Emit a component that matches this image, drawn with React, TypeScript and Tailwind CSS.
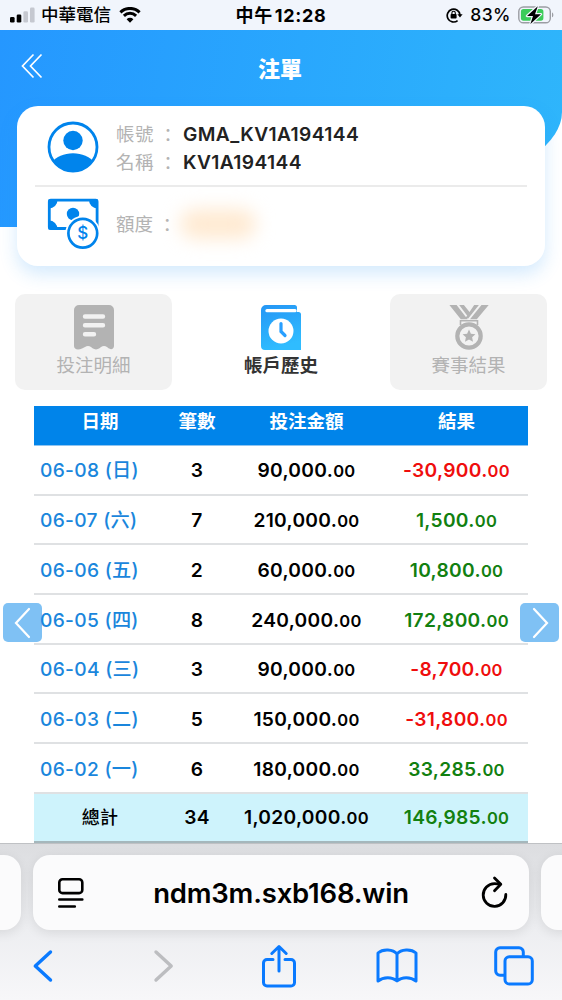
import React from "react";

type HistoryRow = {
  date: string;
  count: number;
  stake: string;
  result: string;
};

const rows: HistoryRow[] = [
  { date: "06-08 (日)", count: 3, stake: "90,000", result: "-30,900" },
  { date: "06-07 (六)", count: 7, stake: "210,000", result: "1,500" },
  { date: "06-06 (五)", count: 2, stake: "60,000", result: "10,800" },
  { date: "06-05 (四)", count: 8, stake: "240,000", result: "172,800" },
  { date: "06-04 (三)", count: 3, stake: "90,000", result: "-8,700" },
  { date: "06-03 (二)", count: 5, stake: "150,000", result: "-31,800" },
  { date: "06-02 (一)", count: 6, stake: "180,000", result: "33,285" },
];

const Amount = ({ value }: { value: string }) => (
  <span>
    {value}.<span className="text-[16.5px]">00</span>
  </span>
);

const StatusBar = () => (
  <div className="flex h-[30px] shrink-0 items-center bg-[#f1f5fc] text-black">
    <div className="flex w-[200px] items-center pl-[10px]">
      <svg width="26" height="16" viewBox="0 0 26 16">
        <rect x="0" y="10" width="4.6" height="5.6" rx="1.3" />
        <rect x="6.7" y="7.4" width="4.6" height="8.2" rx="1.3" />
        <rect x="13.4" y="4.2" width="4.6" height="11.4" rx="1.3" fill="#c5c8d0" />
        <rect x="20" y="0.6" width="4.6" height="15" rx="1.3" fill="#c5c8d0" />
      </svg>
      <span className="ml-[5px] text-[17.5px] font-medium">中華電信</span>
      <svg className="ml-2" width="22" height="16" viewBox="0 0 22 16">
        <path
          d="M1.4 5.3a13.8 13.8 0 0 1 19.2 0M4.9 8.8a8.8 8.8 0 0 1 12.2 0"
          fill="none"
          stroke="#000"
          strokeWidth="3"
        />
        <path d="M11 15.8 7.6 12.2a4.9 4.9 0 0 1 6.8 0z" />
      </svg>
    </div>
    <div className="flex-1 text-center text-[18px] font-bold tracking-[0.7px] whitespace-nowrap">
      中午<span className="ml-[2px]">12:28</span>
    </div>
    <div className="flex w-[200px] items-center justify-end pr-[8px]">
      <svg width="17" height="16" viewBox="0 0 17 16">
        <path
          d="M11.6 13.6A6.4 6.4 0 1 1 14 8"
          fill="none"
          stroke="#000"
          strokeWidth="1.7"
        />
        <path d="M11.4 7.2h5.2L14 10.6z" />
        <rect x="4.6" y="7" width="6" height="4.6" rx="0.8" />
        <path d="M5.9 7V5.9a1.7 1.7 0 0 1 3.4 0V7" fill="none" stroke="#000" strokeWidth="1.1" />
      </svg>
      <span className="ml-[7px] text-[17.5px] font-medium tracking-[0.5px]">83%</span>
      <svg className="ml-[7px]" width="36" height="20" viewBox="0 0 36 20">
        <rect x="0.8" y="2" width="31.5" height="15.8" rx="4.6" fill="none" stroke="#9b9da3" strokeWidth="1.4" />
        <path d="M34 7.5c1.8.6 1.8 4.2 0 4.8z" fill="#9b9da3" />
        <rect x="2.9" y="4.1" width="22.5" height="11.6" rx="2.6" fill="#3ccb5a" />
        <path
          d="M19.8 1.2 9 11h6l-2.6 8L23 9.2h-6z"
          stroke="#f1f5fc"
          strokeWidth="2.4"
          paintOrder="stroke"
          strokeLinejoin="round"
        />
      </svg>
    </div>
  </div>
);

const UserIcon = () => (
  <svg width="52" height="52" viewBox="0 0 52 52" fill="#0084ec">
    <clipPath id="avatar">
      <circle cx="26" cy="26" r="24.5" />
    </clipPath>
    <circle cx="26" cy="26" r="24" fill="none" stroke="#0084ec" strokeWidth="2.8" />
    <circle cx="26" cy="19.5" r="9.7" />
    <path d="M5 41c4-5 12-8.7 21-8.7S43 36 47 41L36 52H16z" clipPath="url(#avatar)" />
  </svg>
);

const CashIcon = () => (
  <svg width="52" height="52" viewBox="0 0 52 52" fill="#0084ec">
    <rect x="2.3" y="2.2" width="47.8" height="28.3" rx="1.5" fill="none" stroke="#0084ec" strokeWidth="2.8" />
    <path d="M1.500 1.500h9a8.500 8.500 0 0 1-9 9zM51 1.500h-9a8.500 8.500 0 0 0 9 9zM1.500 31.500h9a8.500 8.500 0 0 0-9-9z" />
    <circle cx="26" cy="16" r="6.200" />
    <circle cx="35.800" cy="35.300" r="17.500" fill="#fff" />
    <circle cx="35.800" cy="35.300" r="14.400" fill="none" stroke="#0084ec" strokeWidth="2.700" />
    <text
      x="35.8"
      y="41.2"
      textAnchor="middle"
      className="font-['Inter'] text-[17px] font-medium"
    >
      $
    </text>
  </svg>
);

const ReceiptIcon = () => (
  <svg width="40" height="45" viewBox="0 0 40 45">
    <path
      d="M5 0h30a5 5 0 0 1 5 5v36c0 3-3 4-5.500 2.300l-1.500-1.200c-2-1.500-4-1.500-6 0l-1.500 1.200c-2 1.500-5 1.500-7 0L17 42.100c-2-1.500-4-1.500-6 0l-3 1.400C4 45.500 0 44.500 0 41V5a5 5 0 0 1 5-5z"
      fill="#b3b3b3"
    />
    <path d="M11 11.500h18M11 20.300h18M11 29.200h9" stroke="#f2f2f2" strokeWidth="4.400" strokeLinecap="round" />
  </svg>
);

const HistoryIcon = () => (
  <svg width="40" height="45" viewBox="0 0 40 45">
    <defs>
      <linearGradient id="book" x1="0" y1="0" x2="0.300" y2="1">
        <stop offset="0" stopColor="#2596f5" />
        <stop offset="1" stopColor="#2fbcff" />
      </linearGradient>
    </defs>
    <path
      d="M5 0h28.500a2.500 2.500 0 0 1 2.500 2.500V7h1.500A2.500 2.500 0 0 1 40 9.500V45H4a4 4 0 0 1-4-4V5a5 5 0 0 1 5-5z"
      fill="url(#book)"
    />
    <path d="M6 5.700h28" stroke="#fff" strokeWidth="3.300" strokeLinecap="round" />
    <circle cx="20" cy="26" r="12.500" fill="#fff" />
    <path d="M20 18.500V26.500l4 4" fill="none" stroke="#289fff" strokeWidth="3.200" strokeLinecap="round" />
  </svg>
);

const MedalIcon = () => (
  <svg width="40" height="45" viewBox="0 0 40 45" fill="#b3b3b3">
    <path d="M.4 0h7.200l11 14.200h-6.800zM10.200 0h4.700l6.800 8.600-2.500 3.400zM32.500 0h7.200L27.800 14.200H21zM25.200 0h4.700L19.200 13.600 16.500 13z" />
    <path d="M11.500 20v-4.200h17V20" fill="none" stroke="#b3b3b3" strokeWidth="1.600" />
    <circle cx="20" cy="31" r="11.700" fill="none" stroke="#b3b3b3" strokeWidth="4.200" />
    <path d="m20 24.600 1.900 4.100 4.500.5-3.300 3.100.9 4.500-4-2.200-4 2.200.9-4.500-3.300-3.100 4.500-.5z" />
  </svg>
);

const FieldLabel = ({ text }: { text: string }) => (
  <span className="flex w-[67px] shrink-0 text-[18.5px] font-normal text-[#b3b3b3]">
    {text}
    <span className="mt-px ml-[5px]">：</span>
  </span>
);

const AccountCard = () => (
  <div className="relative mx-[17px] -mt-[121px] h-[160px] shrink-0 rounded-[21px] bg-white px-[18px] shadow-[0_8px_18px_rgba(40,150,245,0.2)]">
    <div className="flex h-[81px] items-center border-b-2 border-[#ebebeb] pt-[2px] pl-[12px]">
      <UserIcon />
      <div className="mt-[3px] ml-[17px] text-[19.2px] leading-[28px] font-semibold tracking-[0.4px] text-[#222]">
        <div className="flex h-[28px]">
          <FieldLabel text="帳號" />
          <span>GMA_KV1A194144</span>
        </div>
        <div className="flex h-[28px]">
          <FieldLabel text="名稱" />
          <span>KV1A194144</span>
        </div>
      </div>
    </div>
    <div className="flex h-[73px] items-center pl-[12px] leading-[28px]">
      <CashIcon />
      <div className="ml-[17px] h-[28px]">
        <FieldLabel text="額度" />
      </div>
      <div className="-ml-[3px] h-[30px] w-[76px] rounded-full bg-[#ffead2] blur-[9px]" />
    </div>
  </div>
);

const Tab = ({
  label,
  active,
  children,
}: {
  label: string;
  active?: boolean;
  children: React.ReactNode;
}) => (
  <div
    className={
      active
        ? "flex h-[96px] w-[157px] flex-col items-center rounded-[10px] pt-[11px] text-[#333] font-bold"
        : "flex h-[96px] w-[157px] flex-col items-center rounded-[10px] bg-[#f2f2f2] pt-[11px] text-[#b3b3b3]"
    }
  >
    {children}
    <span className="text-[18.5px] leading-[30px]">{label}</span>
  </div>
);

const HistoryTable = () => (
  <div className="mx-[34px] mt-4 shrink-0 text-center text-[19.2px] font-semibold tracking-[0.3px] text-black">
    <div className="grid h-[40px] grid-cols-[132px_62px_157px_143px] border-b border-[#8fc4f0] bg-[#0084ea] text-[18.5px] leading-[31px] font-bold tracking-normal text-white">
      <span>日期</span>
      <span>筆數</span>
      <span>投注金額</span>
      <span>結果</span>
    </div>
    {rows.map((row) => (
      <div
        key={row.date}
        className="grid h-[49.7px] grid-cols-[132px_62px_157px_143px] items-center border-b-2 border-[#dfe1e3] pt-[2px]"
      >
        <span className="pl-[6px] text-left font-medium text-[#1a86dc]">{row.date}</span>
        <span>{row.count}</span>
        <Amount value={row.stake} />
        <span className={row.result.startsWith("-") ? "text-[#ef0d0d]" : "text-[#128010]"}>
          <Amount value={row.result} />
        </span>
      </div>
    ))}
    <div className="grid h-[49px] grid-cols-[132px_62px_157px_143px] items-center border-b-2 border-[#a5b7bc] bg-[#cef3fc] pt-[1px]">
      <span className="text-[18px] font-medium">總計</span>
      <span>34</span>
      <Amount value="1,020,000" />
      <span className="text-[#128010]">
        <Amount value="146,985" />
      </span>
    </div>
  </div>
);

const BrowserBar = () => (
  <div className="relative h-[157px] overflow-hidden border-t border-[#bfc1c4] bg-linear-to-b from-[#dcdde0] via-[#ecedf0] to-[#f7f7f9] pt-[11px]">
    <div className="-mx-[476px] flex justify-center gap-3">
      <div className="h-[75px] w-[496px] shrink-0 rounded-[17px] bg-[#fbfbfc] shadow-[0_3px_12px_rgba(0,0,0,0.09)]" />
      <div className="flex h-[75px] w-[496px] shrink-0 items-center rounded-[17px] bg-[#fbfbfc] pr-[19px] pl-[24px] shadow-[0_3px_12px_rgba(0,0,0,0.09)]">
        <svg width="28" height="32" viewBox="0 0 28 32" fill="none" stroke="#000" strokeWidth="2.6" strokeLinecap="round">
          <rect x="2.300" y="2.300" width="23" height="13.800" rx="3.200" />
          <path d="M2.300 22.500h23M2.300 29.500h15.500" />
        </svg>
        <span className="flex-1 pt-[2px] pr-[3px] text-center text-[27.5px] font-semibold tracking-[-0.2px] text-black">
          ndm3m.sxb168.win
        </span>
        <svg width="30" height="34" viewBox="0 0 30 34" fill="none" stroke="#000" strokeWidth="2.800" strokeLinecap="round" strokeLinejoin="round">
          <path d="M25.800 18.500a11.300 11.300 0 1 1-11.300-10.800c2 0 4 .2 5.500.6" />
          <path d="m14.500 2 6.300 6.300-6.300 6.500" />
        </svg>
      </div>
      <div className="h-[75px] w-[496px] shrink-0 rounded-[17px] bg-[#fbfbfc] shadow-[0_3px_12px_rgba(0,0,0,0.09)]" />
    </div>
    <div className="flex h-[72px] items-center pl-[32px] text-[#0a7aff]">
      <svg width="22" height="34" viewBox="0 0 22 34" fill="none" stroke="currentColor" strokeWidth="3.400" strokeLinecap="round" strokeLinejoin="round">
        <path d="M18.500 3 3.300 17l15.200 14" />
      </svg>
      <svg className="ml-[99px]" width="22" height="34" viewBox="0 0 22 34" fill="none" stroke="#bcbdc0" strokeWidth="3.400" strokeLinecap="round" strokeLinejoin="round">
        <path d="M3 3l15.200 14L3 31" />
      </svg>
      <svg className="ml-[86px]" width="36" height="44" viewBox="0 0 36 44" fill="none" stroke="currentColor" strokeWidth="3" strokeLinecap="round" strokeLinejoin="round">
        <path d="M12 15.500H6a3.500 3.500 0 0 0-3.500 3.500v19.500A3.500 3.500 0 0 0 6 42h24a3.500 3.500 0 0 0 3.500-3.500V19a3.500 3.500 0 0 0-3.500-3.500h-6" />
        <path d="M18 27V3M10.800 9.500 18 2.500l7.200 7" />
      </svg>
      <svg className="ml-[79px]" width="42" height="36" viewBox="0 0 42 36" fill="none" stroke="currentColor" strokeWidth="3" strokeLinejoin="round">
        <path d="M21 6C17 1 7 .500 2 5v28c5.500-4.500 14-4.500 19 0 5-4.500 13.500-4.500 19 0V5C35 .500 25 1 21 6zM21 6v27" />
      </svg>
      <svg className="ml-[76px]" width="40" height="40" viewBox="0 0 40 40" fill="none" stroke="currentColor" strokeWidth="3">
        <path d="M10.500 29.300H6a4.300 4.300 0 0 1-4.300-4.300V6A4.300 4.300 0 0 1 6 1.700h19A4.300 4.300 0 0 1 29.300 6v4.500" />
        <rect x="11" y="10.700" width="27.300" height="27.300" rx="4.300" />
      </svg>
    </div>
  </div>
);

const PageArrow = ({ d }: { d: string }) => (
  <div className="flex h-[39px] w-[39px] items-center justify-center rounded-[5px] bg-[#0084ea]/50">
    <svg width="20" height="34" viewBox="0 0 20 34" fill="none" stroke="#fff" strokeWidth="2.200" strokeLinecap="round">
      <path d={d} />
    </svg>
  </div>
);

export default function App() {
  return (
    <div className="relative flex h-[1000px] w-[562px] flex-col overflow-hidden bg-white font-['Inter','Noto_Sans_CJK_TC',sans-serif]">
      <StatusBar />
      <div className="h-[197px] shrink-0 rounded-br-[380px_115px] bg-linear-100 from-[#2597ff] to-[#2fb6fb]">
        <div className="flex h-[76px] items-center px-[20px]">
          <svg width="24" height="26" viewBox="0 0 24 26" fill="none" stroke="#fff" strokeWidth="1.700" className="-mt-1">
            <path d="M13.500 1.500 2.500 13l11 11.500M21.500 1.500 10.500 13l11 11.500" />
          </svg>
          <h1 className="flex-1 pt-[2px] pr-[26px] text-center text-[22px] font-extrabold text-white">注單</h1>
        </div>
      </div>
      <AccountCard />
      <div className="mx-[15px] mt-[28px] flex shrink-0 justify-between">
        <Tab label="投注明細">
          <ReceiptIcon />
        </Tab>
        <Tab label="帳戶歷史" active>
          <HistoryIcon />
        </Tab>
        <Tab label="賽事結果">
          <MedalIcon />
        </Tab>
      </div>
      <HistoryTable />
      <div className="absolute top-[603px] left-[3px]">
        <PageArrow d="M16 3 3 17l13 14" />
      </div>
      <div className="absolute top-[603px] right-[3px]">
        <PageArrow d="M4 3l13 14L4 31" />
      </div>
      <div className="mt-auto shrink-0">
        <BrowserBar />
      </div>
    </div>
  );
}
